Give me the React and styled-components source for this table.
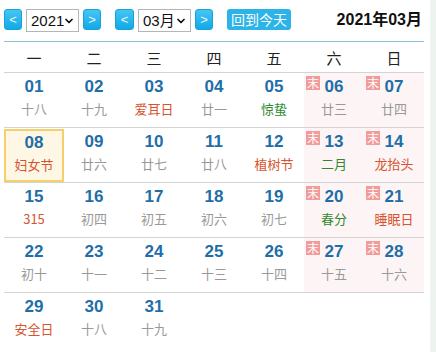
import React from 'react';
import styled, { createGlobalStyle } from 'styled-components';
import { ChevronDown } from 'lucide-react';

const GlobalStyle = createGlobalStyle`
  html, body {
    margin: 0;
    padding: 0;
    background: #edf3ef;
    font-family: "Liberation Sans", "Noto Sans CJK SC", sans-serif;
  }
`;

const Page = styled.div`
  width: 430px;
  height: 352px;
  background: #fff;
  overflow: hidden;
`;

const Toolbar = styled.div`
  display: flex;
  align-items: flex-start;
  height: 41px;
  box-sizing: border-box;
  padding: 9px 8px 0 4px;
`;

const Group = styled.div`
  display: flex;
  align-items: flex-start;
  gap: 4px;
  margin-right: ${(p) => p.gap || 0}px;
`;

const NavBtn = styled.button`
  width: ${(p) => p.w || 18}px;
  height: 21px;
  padding: 0;
  border: 1px solid #14a3dd;
  border-radius: 3px;
  background: linear-gradient(#45c6f3, #12a8e6);
  color: #e8f7ff;
  font-family: "Liberation Sans", sans-serif;
  font-size: 13px;
  line-height: 19px;
  cursor: pointer;
`;

const SelectWrap = styled.div`
  position: relative;
  width: 53px;
  height: 23px;
`;

const Select = styled.select`
  appearance: none;
  -webkit-appearance: none;
  width: 100%;
  height: 100%;
  box-sizing: border-box;
  border: 1px solid #b5b5b5;
  border-radius: 0;
  background: #fff;
  color: #111;
  font-family: "Liberation Sans", "Noto Sans CJK SC", sans-serif;
  font-size: 15px;
  padding: 0 0 0 4px;
  outline: none;
`;

const Chevron = styled(ChevronDown)`
  position: absolute;
  right: 4px;
  top: 6px;
  pointer-events: none;
  color: #111;
`;

const TodayBtn = styled.button`
  width: 64px;
  height: 21px;
  padding: 0;
  border: none;
  border-radius: 3px;
  background: #2cb4e8;
  color: #fff;
  font-family: "Noto Sans CJK SC", sans-serif;
  font-size: 14px;
  line-height: 21px;
`;

const Title = styled.div`
  margin-left: auto;
  margin-top: 1px;
  font-family: "Liberation Sans", "Noto Sans CJK SC", sans-serif;
  font-weight: bold;
  font-size: 16px;
  color: #111;
  line-height: 20px;
`;

const Calendar = styled.div`
  width: 420px;
  margin-left: 4px;
  border-top: 1px solid #86c2de;
`;

const Row = styled.div`
  display: grid;
  grid-template-columns: repeat(7, 60px);
  height: ${(p) => p.h}px;
  border-bottom: ${(p) => (p.last ? 'none' : '1px solid #d3d3d3')};
`;

const WeekDay = styled.div`
  display: flex;
  align-items: center;
  justify-content: center;
  font-family: "Noto Sans CJK SC", sans-serif;
  font-size: 15px;
  color: #222;
`;

const Cell = styled.div`
  position: relative;
  box-sizing: border-box;
  display: flex;
  flex-direction: column;
  align-items: center;
  padding-top: ${(p) => (p.selected ? 2 : 4)}px;
  background: ${(p) => (p.selected ? '#fef7e6' : p.weekend ? '#fdf5f5' : 'transparent')};
  border: ${(p) => (p.selected ? '2px solid #f5d068' : 'none')};
  margin-top: ${(p) => (p.selected ? 1 : 0)}px;
`;

const DayNum = styled.div`
  font-family: "Liberation Sans", sans-serif;
  font-weight: bold;
  font-size: 17px;
  line-height: 20px;
  color: #1f6ea8;
`;

const Lunar = styled.div`
  margin-top: 4px;
  font-family: "Noto Sans CJK SC", sans-serif;
  font-size: 13px;
  line-height: 16px;
  color: ${(p) => (p.kind === 'fest' ? '#d6542f' : p.kind === 'term' ? '#2f8a2f' : '#999')};
`;

const Badge = styled.span`
  position: absolute;
  left: 2px;
  top: 3px;
  width: 14px;
  height: 14px;
  background: #f19b9b;
  color: #fff;
  font-family: "Noto Sans CJK SC", sans-serif;
  font-size: 12px;
  line-height: 14px;
  text-align: center;
`;

const weekdays = ['一', '二', '三', '四', '五', '六', '日'];

const days = [
  ['十八'], ['十九'], ['爱耳日', 'fest'], ['廿一'], ['惊蛰', 'term'], ['廿三'], ['廿四'],
  ['妇女节', 'fest'], ['廿六'], ['廿七'], ['廿八'], ['植树节', 'fest'], ['二月', 'term'], ['龙抬头', 'fest'],
  ['315', 'fest'], ['初四'], ['初五'], ['初六'], ['初七'], ['春分', 'term'], ['睡眠日', 'fest'],
  ['初十'], ['十一'], ['十二'], ['十三'], ['十四'], ['十五'], ['十六'],
  ['安全日', 'fest'], ['十八'], ['十九'],
];

const weeks = [];
for (let i = 0; i < 35; i += 7) {
  const w = [];
  for (let j = 0; j < 7; j++) w.push(i + j < days.length ? i + j + 1 : null);
  weeks.push(w);
}

const Dropdown = ({ value, label }) => (
  <SelectWrap>
    <Select defaultValue={value}>
      <option value={value}>{label}</option>
    </Select>
    <Chevron size={12} strokeWidth={3.5} />
  </SelectWrap>
);

const App = () => {
  return (
    <Page>
      <GlobalStyle />
      <Toolbar>
        <Group gap={14}>
          <NavBtn>&lt;</NavBtn>
          <Dropdown value="2021" label="2021" />
          <NavBtn>&gt;</NavBtn>
        </Group>
        <Group gap={14}>
          <NavBtn w={19}>&lt;</NavBtn>
          <Dropdown value="03" label="03月" />
          <NavBtn>&gt;</NavBtn>
        </Group>
        <TodayBtn>回到今天</TodayBtn>
        <Title>2021年03月</Title>
      </Toolbar>
      <Calendar>
        <Row h={30}>
          {weekdays.map((d) => (
            <WeekDay key={d}>{d}</WeekDay>
          ))}
        </Row>
        {weeks.map((w, wi) => (
          <Row key={wi} h={54} last={wi === weeks.length - 1}>
            {w.map((d, di) => {
              if (!d) return <Cell key={di} />;
              const [text, kind] = days[d - 1];
              const weekend = di >= 5;
              return (
                <Cell key={di} weekend={weekend} selected={d === 8}>
                  {weekend && <Badge>末</Badge>}
                  <DayNum>{String(d).padStart(2, '0')}</DayNum>
                  <Lunar kind={kind}>{text}</Lunar>
                </Cell>
              );
            })}
          </Row>
        ))}
      </Calendar>
    </Page>
  );
};

export default App;
